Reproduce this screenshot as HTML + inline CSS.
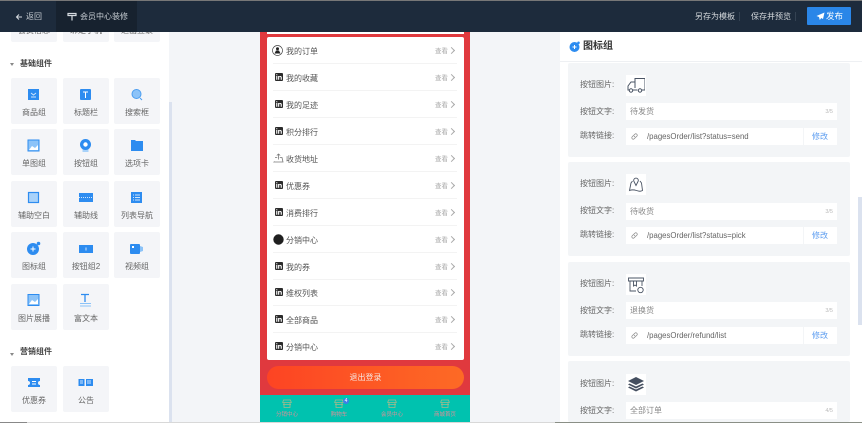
<!DOCTYPE html>
<html lang="zh"><head><meta charset="utf-8"><style>
*{box-sizing:border-box}
html,body{margin:0;padding:0;background:#f3f5f8}
#w{width:862px;height:423px;overflow:hidden;position:relative;background:#f3f5f8;font-family:"Liberation Sans","Noto Sans CJK SC",sans-serif;color:#555;filter:blur(.3px)}
.a{position:absolute}
svg{position:absolute;display:block}
.t{position:absolute;width:46px;height:46px;background:#f4f5f8;border-radius:2px;font-size:8px;color:#666;text-align:center;white-space:nowrap}
.t span{position:absolute;left:-3px;right:-3px;top:29px;line-height:12px}
.t svg{left:12px;top:6px}
.sec{position:absolute;left:20px;font-size:8px;font-weight:bold;color:#444;line-height:12px}
.tri{position:absolute;left:10px;width:0;height:0;border:2.5px solid transparent;border-top:3px solid #888}
.r{position:absolute;left:273px;width:184px;height:27px;border-bottom:1px solid #f3f3f3;font-size:8px;color:#555}
.r b{position:absolute;left:13px;top:8px;font-weight:normal;line-height:13px;white-space:nowrap}
.r i{position:absolute;left:162px;top:9px;font-style:normal;font-size:6.5px;color:#aaa;line-height:12px}
.r u{position:absolute;left:176px;top:11px;width:5px;height:5px;border-top:1px solid #aaa;border-right:1px solid #aaa;transform:rotate(45deg);transform-origin:center}
.r svg.in{left:2px;top:9px}
.card{position:absolute;left:568px;width:282px;background:#f3f5f7;border-radius:2px}
.l{position:absolute;left:12px;font-size:8px;color:#666;line-height:12px}
.ib{position:absolute;left:58px;top:12px;width:20px;height:21px;background:#fff}
.ib svg{left:1px;top:1px}
.in1{position:absolute;left:58px;width:211px;height:17px;background:#fff;font-size:8px;color:#888;line-height:18px;padding-left:4px}
.in1 em{position:absolute;right:4px;top:0;font-style:normal;font-size:5.5px;color:#bbb}
.lk{position:absolute;left:58px;width:211px;height:17px;background:#fff;font-size:7.8px;color:#666;line-height:17px}
.lk span{position:absolute;left:21px;white-space:nowrap}
.lk i{position:absolute;left:177px;top:0;bottom:0;width:1px;background:#f3f5f7}
.lk b{position:absolute;left:186px;top:0;font-weight:normal;font-size:8px;color:#5b9cf0}
.lk svg{left:5px;top:5px}
.tb{position:absolute;top:395px;width:52px;height:28px;text-align:center;font-size:5.5px;color:#d98f98}
.tb span{position:absolute;left:0;right:0;top:16px;line-height:8px}
.tb svg{left:21px;top:4px}
</style></head><body><div id="w">

<!-- sidebar -->
<div class="a" style="left:0;top:32px;width:169px;height:391px;background:#fff"></div>
<div class="a" style="left:169px;top:102px;width:3px;height:321px;background:#dbe2ef"></div>
<div class="t" style="left:11px;top:-4px"><span>会员信息</span></div>
<div class="t" style="left:63px;top:-4px"><span>绑定手机</span></div>
<div class="t" style="left:114px;top:-4px"><span>退出登录</span></div>
<div class="tri" style="top:63px"></div><div class="sec" style="top:58px">基础组件</div>

<div class="t" style="left:11px;top:78px"><svg width="22" height="22" viewBox="0 0 22 22"><rect x="5" y="5" width="11" height="11" fill="#2d8cf0"/><path d="M8 9l2.500 2 2.500-2M8 13h5" stroke="#cfe4fb" fill="none"/></svg><span>商品组</span></div>
<div class="t" style="left:63px;top:78px"><svg width="22" height="22" viewBox="0 0 22 22"><rect x="5" y="5" width="11" height="11" rx="1" fill="#2d8cf0"/><path d="M8 8h5M10.500 8v6" stroke="#fff"/></svg><span>标题栏</span></div>
<div class="t" style="left:114px;top:78px"><svg width="22" height="22" viewBox="0 0 22 22"><circle cx="10.500" cy="10" r="4.500" fill="#8cc3f8" stroke="#4a9df0"/><path d="M14 14l2 2" stroke="#4a9df0"/></svg><span>搜索框</span></div>

<div class="t" style="left:11px;top:129px"><svg width="22" height="22" viewBox="0 0 22 22"><rect x="5" y="5" width="11" height="11" fill="#8cc3f8" stroke="#2d8cf0"/><path d="M6 15l3-4 3 2 3-3v5z" fill="#fff"/></svg><span>单图组</span></div>
<div class="t" style="left:63px;top:129px"><svg width="22" height="22" viewBox="0 0 22 22"><rect x="7.500" y="12" width="6" height="5" fill="#a8d2fa"/><circle cx="10.500" cy="9.500" r="5.500" fill="#2d8cf0"/><circle cx="10.500" cy="9.500" r="2.200" fill="#fff"/></svg><span>按钮组</span></div>
<div class="t" style="left:114px;top:129px"><svg width="22" height="22" viewBox="0 0 22 22"><path d="M5 5h4l1 1h7v10H5z" fill="#2d8cf0"/></svg><span>选项卡</span></div>

<div class="t" style="left:11px;top:181px"><svg width="22" height="22" viewBox="0 0 22 22"><rect x="5.500" y="5.500" width="10" height="10" fill="#a8d2fa" stroke="#2d8cf0" stroke-width="1.200"/></svg><span>辅助空白</span></div>
<div class="t" style="left:63px;top:181px"><svg width="22" height="22" viewBox="0 0 22 22"><rect x="4" y="6" width="14" height="9" fill="#2d8cf0"/><path d="M4 10.500h14" stroke="#cfe4fb" stroke-dasharray="1 1"/></svg><span>辅助线</span></div>
<div class="t" style="left:114px;top:181px"><svg width="22" height="22" viewBox="0 0 22 22"><rect x="5" y="5" width="11" height="11" fill="#2d8cf0"/><path d="M9 8h5M9 10.500h5M9 13h5M7 8h1M7 10.500h1M7 13h1" stroke="#cfe4fb"/></svg><span>列表导航</span></div>

<div class="t" style="left:11px;top:232px"><svg width="22" height="22" viewBox="0 0 22 22"><circle cx="10" cy="11" r="6" fill="#2d8cf0"/><path d="M7.500 11h5M10 8.500v5" stroke="#fff"/><circle cx="15.500" cy="5.500" r="1.800" fill="#2d8cf0"/></svg><span>图标组</span></div>
<div class="t" style="left:63px;top:232px"><svg width="22" height="22" viewBox="0 0 22 22"><rect x="4" y="7" width="14" height="8" fill="#2d8cf0"/><path d="M11 9.500v3" stroke="#cfe4fb"/></svg><span>按钮组2</span></div>
<div class="t" style="left:114px;top:232px"><svg width="22" height="22" viewBox="0 0 22 22"><rect x="4" y="6" width="10" height="10" rx="1" fill="#2d8cf0"/><path d="M14 8l3 1v4l-3 1z" fill="#8cc3f8"/><rect x="6" y="8" width="2" height="2" fill="#fff"/></svg><span>视频组</span></div>

<div class="t" style="left:11px;top:284px"><svg width="22" height="22" viewBox="0 0 22 22"><rect x="5" y="4.500" width="11" height="11" fill="#8cc3f8" stroke="#2d8cf0"/><path d="M6 14l3-4 3 2 3-3v5z" fill="#fff"/></svg><span>图片展播</span></div>
<div class="t" style="left:63px;top:284px"><svg width="22" height="22" viewBox="0 0 22 22"><path d="M6 4.500h8M10 4.500V12" stroke="#2d8cf0" stroke-width="1.300"/><path d="M5 13.500h11M5 16h11" stroke="#8cc3f8"/></svg><span>富文本</span></div>

<div class="tri" style="top:353px"></div><div class="sec" style="top:346px">营销组件</div>
<div class="t" style="left:11px;top:366px"><svg width="22" height="22" viewBox="0 0 22 22"><path d="M5 6h12v3a2 2 0 0 0 0 4v2H5v-2a2 2 0 0 0 0-4z" fill="#2d8cf0"/><path d="M9 9.500h4M9 12h4" stroke="#fff"/></svg><span>优惠券</span></div>
<div class="t" style="left:63px;top:366px"><svg width="22" height="22" viewBox="0 0 22 22"><rect x="3.500" y="7" width="6" height="7" fill="#2d8cf0"/><rect x="11" y="7" width="7" height="7" fill="#2d8cf0"/><path d="M5 9h3M5 11h3M12 9h4M12 11h4" stroke="#cfe4fb"/></svg><span>公告</span></div>

<!-- phone -->
<div class="a" style="left:260px;top:32px;width:210px;height:363px;background:#e0393e"></div>
<div class="a" style="left:267px;top:32px;width:197px;height:2px;background:#fff"></div>
<div class="a" style="left:267px;top:37px;width:197px;height:323px;background:#fff;border-radius:2px"></div>
<div class="r" style="top:37px"><svg style="left:-1px;top:8px" width="11" height="11" viewBox="0 0 11 11"><circle cx="5.500" cy="5.500" r="5" fill="#fff" stroke="#444" stroke-width=".7"/><circle cx="5.500" cy="3.800" r="1.500" fill="#222"/><path d="M2.500 8.500 4 5.500h3l1.500 3z" fill="#222"/></svg><b>我的订单</b><i>查看</i><u></u></div>
<div class="r" style="top:64px"><svg class="in" width="8" height="8" viewBox="0 0 8 8"><rect width="8" height="8" rx="1" fill="#2b2b2b"/><path d="M1.200 1.300h1.100v1H1.200zM1.200 3h1.100v3.700H1.200zM3.100 3h1v.5c.8-.8 2.700-.8 2.700.9v2.300H5.700V4.700c0-.9-1.500-.9-1.500 0v2H3.100z" fill="#fff"/></svg><b>我的收藏</b><i>查看</i><u></u></div>
<div class="r" style="top:91px"><svg class="in" width="8" height="8" viewBox="0 0 8 8"><rect width="8" height="8" rx="1" fill="#2b2b2b"/><path d="M1.200 1.300h1.100v1H1.200zM1.200 3h1.100v3.700H1.200zM3.100 3h1v.5c.8-.8 2.700-.8 2.700.9v2.300H5.700V4.700c0-.9-1.500-.9-1.500 0v2H3.100z" fill="#fff"/></svg><b>我的足迹</b><i>查看</i><u></u></div>
<div class="r" style="top:118px"><svg class="in" width="8" height="8" viewBox="0 0 8 8"><rect width="8" height="8" rx="1" fill="#2b2b2b"/><path d="M1.200 1.300h1.100v1H1.200zM1.200 3h1.100v3.700H1.200zM3.100 3h1v.5c.8-.8 2.700-.8 2.700.9v2.300H5.700V4.700c0-.9-1.500-.9-1.500 0v2H3.100z" fill="#fff"/></svg><b>积分排行</b><i>查看</i><u></u></div>
<div class="r" style="top:145px"><svg style="left:0;top:8px" width="11" height="10" viewBox="0 0 11 10"><path d="M1.500 8.500 1 9h9l-1-4.500H6.800M4.200 4.500H2zM5.500 6.500V1M3.800 2.500 5.500 1l1.700 1.500" fill="none" stroke="#777" stroke-width=".8"/></svg><b>收货地址</b><i>查看</i><u></u></div>
<div class="r" style="top:172px"><svg class="in" width="8" height="8" viewBox="0 0 8 8"><rect width="8" height="8" rx="1" fill="#2b2b2b"/><path d="M1.200 1.300h1.100v1H1.200zM1.200 3h1.100v3.700H1.200zM3.100 3h1v.5c.8-.8 2.700-.8 2.700.9v2.300H5.700V4.700c0-.9-1.500-.9-1.500 0v2H3.100z" fill="#fff"/></svg><b>优惠券</b><i>查看</i><u></u></div>
<div class="r" style="top:199px"><svg class="in" width="8" height="8" viewBox="0 0 8 8"><rect width="8" height="8" rx="1" fill="#2b2b2b"/><path d="M1.200 1.300h1.100v1H1.200zM1.200 3h1.100v3.700H1.200zM3.100 3h1v.5c.8-.8 2.700-.8 2.700.9v2.300H5.700V4.700c0-.9-1.500-.9-1.500 0v2H3.100z" fill="#fff"/></svg><b>消费排行</b><i>查看</i><u></u></div>
<div class="r" style="top:226px"><svg style="left:0;top:8px" width="11" height="11" viewBox="0 0 11 11"><circle cx="5.500" cy="5.500" r="5.200" fill="#1f1f1f"/></svg><b>分销中心</b><i>查看</i><u></u></div>
<div class="r" style="top:253px"><svg class="in" width="8" height="8" viewBox="0 0 8 8"><rect width="8" height="8" rx="1" fill="#2b2b2b"/><path d="M1.200 1.300h1.100v1H1.200zM1.200 3h1.100v3.700H1.200zM3.100 3h1v.5c.8-.8 2.700-.8 2.700.9v2.300H5.700V4.700c0-.9-1.500-.9-1.500 0v2H3.100z" fill="#fff"/></svg><b>我的券</b><i>查看</i><u></u></div>
<div class="r" style="top:279px"><svg class="in" width="8" height="8" viewBox="0 0 8 8"><rect width="8" height="8" rx="1" fill="#2b2b2b"/><path d="M1.200 1.300h1.100v1H1.200zM1.200 3h1.100v3.700H1.200zM3.100 3h1v.5c.8-.8 2.700-.8 2.700.9v2.300H5.700V4.700c0-.9-1.500-.9-1.500 0v2H3.100z" fill="#fff"/></svg><b>维权列表</b><i>查看</i><u></u></div>
<div class="r" style="top:306px"><svg class="in" width="8" height="8" viewBox="0 0 8 8"><rect width="8" height="8" rx="1" fill="#2b2b2b"/><path d="M1.200 1.300h1.100v1H1.200zM1.200 3h1.100v3.700H1.200zM3.100 3h1v.5c.8-.8 2.700-.8 2.700.9v2.300H5.700V4.700c0-.9-1.500-.9-1.500 0v2H3.100z" fill="#fff"/></svg><b>全部商品</b><i>查看</i><u></u></div>
<div class="r" style="top:333px;border-bottom:0"><svg class="in" width="8" height="8" viewBox="0 0 8 8"><rect width="8" height="8" rx="1" fill="#2b2b2b"/><path d="M1.200 1.300h1.100v1H1.200zM1.200 3h1.100v3.700H1.200zM3.100 3h1v.5c.8-.8 2.700-.8 2.700.9v2.300H5.700V4.700c0-.9-1.500-.9-1.500 0v2H3.100z" fill="#fff"/></svg><b>分销中心</b><i>查看</i><u></u></div>

<div class="a" style="left:267px;top:366px;width:197px;height:23px;border-radius:12px;background:linear-gradient(90deg,#fd4423,#fd6a25);color:#f6e5e0;font-size:8px;line-height:23px;text-align:center">退出登录</div>
<div class="a" style="left:260px;top:395px;width:210px;height:28px;background:#00c2af"></div>
<div class="tb" style="left:261px"><svg width="10" height="10" viewBox="0 0 10 10"><path d="M1.500 1h7l.8 2.500H.7zM2 3.500V8.500h6V3.500M1 5.500h8" fill="none" stroke="#a6b98c" stroke-width=".8"/></svg><span>分销中心</span></div>
<div class="tb" style="left:313px"><svg width="10" height="10" viewBox="0 0 10 10"><path d="M1.500 1h7l.8 2.500H.7zM2 3.500V8.500h6V3.500M1 5.500h8" fill="none" stroke="#a6b98c" stroke-width=".8"/></svg><span>购物车</span></div>
<div class="a" style="left:343px;top:398px;width:6px;height:6px;border-radius:50%;background:#3f7ee8;color:#fff;font-size:5px;line-height:6px;text-align:center">4</div>
<div class="tb" style="left:366px"><svg width="10" height="10" viewBox="0 0 10 10"><path d="M1.500 1h7l.8 2.500H.7zM2 3.500V8.500h6V3.500M1 5.500h8" fill="none" stroke="#a6b98c" stroke-width=".8"/></svg><span>会员中心</span></div>
<div class="tb" style="left:419px"><svg width="10" height="10" viewBox="0 0 10 10"><path d="M1.500 1h7l.8 2.500H.7zM2 3.500V8.500h6V3.500M1 5.500h8" fill="none" stroke="#a6b98c" stroke-width=".8"/></svg><span>商城首页</span></div>

<!-- right panel -->
<div class="a" style="left:560px;top:32px;width:302px;height:390px;background:#fff"></div>
<div class="a" style="left:560px;top:61px;width:302px;height:1px;background:#eef0f3"></div>
<svg style="left:569px;top:41px" width="11" height="11" viewBox="0 0 11 11"><circle cx="5.500" cy="6" r="5" fill="#2d8cf0"/><path d="M3.500 6h4M5.500 4v4" stroke="#fff"/><circle cx="9.500" cy="1.800" r="1.300" fill="#2d8cf0"/></svg>
<div class="a" style="left:583px;top:39px;font-size:10px;font-weight:bold;color:#333;line-height:15px">图标组</div>
<div class="a" style="left:858px;top:197px;width:4px;height:128px;background:#dbe2ef"></div>

<div class="card" style="top:63px;height:94px">
<div class="l" style="top:16px">按钮图片:</div><div class="ib"><svg width="18" height="19" viewBox="0 0 18 19"><path d="M8 12V2.500h10V14H15M10.500 14H6M8 6H4L1 10v4h1" fill="none" stroke="#4a5464" stroke-width="1"/><circle cx="4" cy="14.500" r="1.700" fill="none" stroke="#4a5464"/><circle cx="13" cy="14.500" r="1.700" fill="none" stroke="#4a5464"/></svg></div>
<div class="l" style="top:43px">按钮文字:</div><div class="in1" style="top:40px">待发货<em>3/5</em></div>
<div class="l" style="top:67px">跳转链接:</div><div class="lk" style="top:65px"><svg width="7" height="7" viewBox="0 0 7 7"><path d="M3 4 4 3M2.500 2.500 3.800 1.200a1.300 1.300 0 0 1 2 2L4.500 4.500M4.500 4.500 3.200 5.800a1.300 1.300 0 0 1-2-2L2.500 2.500" fill="none" stroke="#888" stroke-width=".7"/></svg><span>/pagesOrder/list?status=send</span><i></i><b>修改</b></div>
</div>

<div class="card" style="top:162px;height:94px">
<div class="l" style="top:16px">按钮图片:</div><div class="ib"><svg width="18" height="19" viewBox="0 0 18 19"><path d="M5.500 6 4 8 2.500 15.500c2.500-1 4-1 7 0s4 1 6 0L14.500 8 13 6" fill="none" stroke="#4a5464" stroke-width=".9"/><path d="M9 10.500 7 6.500a2.300 2.300 0 1 1 4 0z" fill="none" stroke="#4a5464" stroke-width=".9"/></svg></div>
<div class="l" style="top:43px">按钮文字:</div><div class="in1" style="top:41px">待收货<em>3/5</em></div>
<div class="l" style="top:67px">跳转链接:</div><div class="lk" style="top:65px"><svg width="7" height="7" viewBox="0 0 7 7"><path d="M3 4 4 3M2.500 2.500 3.800 1.200a1.300 1.300 0 0 1 2 2L4.500 4.500M4.500 4.500 3.200 5.800a1.300 1.300 0 0 1-2-2L2.500 2.500" fill="none" stroke="#888" stroke-width=".7"/></svg><span>/pagesOrder/list?status=pick</span><i></i><b>修改</b></div>
</div>

<div class="card" style="top:262px;height:94px">
<div class="l" style="top:16px">按钮图片:</div><div class="ib"><svg width="18" height="19" viewBox="0 0 18 19"><path d="M1.500 3h15v3h-15zM3 6v10h6M15 6v5M6.500 6v5l1.500-1 1.500 1V6" fill="none" stroke="#4a5464" stroke-width=".9"/><circle cx="13.500" cy="15" r="2.700" fill="#fff" stroke="#4a5464" stroke-width=".9"/></svg></div>
<div class="l" style="top:43px">按钮文字:</div><div class="in1" style="top:40px">退换货<em>3/5</em></div>
<div class="l" style="top:67px">跳转链接:</div><div class="lk" style="top:65px"><svg width="7" height="7" viewBox="0 0 7 7"><path d="M3 4 4 3M2.500 2.500 3.800 1.200a1.300 1.300 0 0 1 2 2L4.500 4.500M4.500 4.500 3.200 5.800a1.300 1.300 0 0 1-2-2L2.500 2.500" fill="none" stroke="#888" stroke-width=".7"/></svg><span>/pagesOrder/refund/list</span><i></i><b>修改</b></div>
</div>

<div class="card" style="top:361px;height:61px">
<div class="l" style="top:17px">按钮图片:</div><div class="ib" style="top:13px"><svg width="18" height="19" viewBox="0 0 18 19"><path d="M9 2 17 6 9 10 1 6z" fill="#454f60"/><path d="M2.500 8.500 9 11.500l6.500-3L17 9.500 9 13.500 1 9.500z" fill="#454f60"/><path d="M2.500 11.500 9 14.500l6.500-3L17 12.500 9 16.500 1 12.500z" fill="#454f60"/></svg></div>
<div class="l" style="top:44px">按钮文字:</div><div class="in1" style="top:41px">全部订单<em>4/5</em></div>
</div>

<!-- bottom lines -->
<div class="a" style="left:0;top:422px;width:862px;height:1px;background:#d8d8d8"></div>
<div class="a" style="left:0;top:422px;width:27px;height:1px;background:#888"></div>
<div class="a" style="left:555px;top:422px;width:307px;height:1px;background:#8a8f86"></div>

<!-- top bar -->
<div class="a" style="left:0;top:0;width:862px;height:1px;background:#777"></div>
<div class="a" style="left:0;top:1px;width:862px;height:31px;background:#1d2b3c"></div>
<div class="a" style="left:56px;top:1px;width:81px;height:31px;background:#17222f"></div>
<svg style="left:15px;top:13px" width="8" height="8" viewBox="0 0 8 8"><path d="M7 4H1.500M4 1.500 1.500 4 4 6.500" fill="none" stroke="#d6dbe0" stroke-width="1"/></svg>
<div class="a" style="left:26px;top:10px;font-size:8px;line-height:13px;color:#c6ccd2">返回</div>
<svg style="left:67px;top:12px" width="10" height="10" viewBox="0 0 10 10"><path d="M1 1.500h8v2H1zM5 3.500v5" fill="none" stroke="#d6dbe0" stroke-width="1.200"/></svg>
<div class="a" style="left:80px;top:10px;font-size:8px;line-height:13px;color:#c6ccd2">会员中心装修</div>
<div class="a" style="left:695px;top:10px;font-size:8px;line-height:13px;color:#d5d9dd">另存为模板</div>
<div class="a" style="left:751px;top:10px;font-size:8px;line-height:13px;color:#d5d9dd">保存并预览</div>
<div class="a" style="left:739px;top:12px;width:1px;height:9px;background:#344252"></div>
<div class="a" style="left:795px;top:12px;width:1px;height:9px;background:#344252"></div>
<div class="a" style="left:807px;top:7px;width:44px;height:18px;background:#2a86e8;border-radius:1px"></div>
<svg style="left:816px;top:12px" width="9" height="9" viewBox="0 0 9 9"><path d="M8.500.5 .5 4l2.500 1 .8 3L5.200 6 7 7z" fill="#fff"/></svg>
<div class="a" style="left:826px;top:10px;font-size:8.5px;line-height:13px;color:#fff">发布</div>
</div></body></html>
